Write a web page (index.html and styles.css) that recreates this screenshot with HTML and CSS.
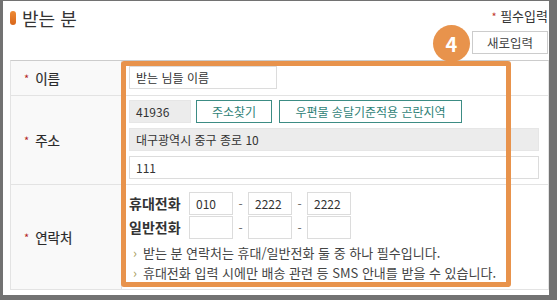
FILE: index.html
```html
<!DOCTYPE html>
<html lang="ko">
<head>
<meta charset="utf-8">
<link rel="stylesheet" href="styles.css">
</head>
<body>
<div class="frame">
  <div class="head">
    <h2 class="title"><span class="pill"></span>받는 분</h2>
    <div class="head-right">
      <div class="req"><span class="star">*</span> 필수입력</div>
      <button class="btn-reset">새로입력</button>
    </div>
  </div>
  <div class="table">
    <div class="th r1"><span class="star">*</span>이름</div>
    <div class="td r1">
      <div class="input w-name">받는 님들 이름</div>
    </div>
    <div class="th r2"><span class="star">*</span>주소</div>
    <div class="td r2 addr">
      <div class="line">
        <div class="input gray w-zip">41936</div>
        <button class="btn-teal w-find">주소찾기</button>
        <button class="btn-teal w-hard">우편물 송달기준적용 곤란지역</button>
      </div>
      <div class="input gray w-full">대구광역시 중구 종로 10</div>
      <div class="input w-full">111</div>
    </div>
    <div class="th r3"><span class="star">*</span>연락처</div>
    <div class="td r3 contact">
      <div class="phone">
        <span class="plabel">휴대전화</span>
        <div class="input w-ph">010</div><span class="dash">-</span>
        <div class="input w-ph">2222</div><span class="dash">-</span>
        <div class="input w-ph">2222</div>
      </div>
      <div class="phone">
        <span class="plabel">일반전화</span>
        <div class="input w-ph"></div><span class="dash">-</span>
        <div class="input w-ph"></div><span class="dash">-</span>
        <div class="input w-ph"></div>
      </div>
      <ul class="notes">
        <li>받는 분 연락처는 휴대/일반전화 둘 중 하나 필수입니다.</li>
        <li>휴대전화 입력 시에만 배송 관련 등 SMS 안내를 받을 수 있습니다.</li>
      </ul>
    </div>
  </div>
  <div class="highlight"></div>
  <div class="badge">4</div>
</div>
</body>
</html>
```
FILE: styles.css
```css
* { box-sizing: border-box; }
html, body { margin: 0; padding: 0; }
body {
  background: #727272;
  width: 557px;
  height: 300px;
  overflow: hidden;
  font-family: "Noto Sans CJK KR", "Noto Sans", sans-serif;
  color: #333;
}
.frame {
  position: relative;
  margin: 1px 0 0 3px;
  width: 546px;
  height: 294px;
  background: #fff;
  padding: 0 0 0 7px;
}
.head {
  display: flex;
  justify-content: space-between;
  height: 59px;
  padding-right: 1px;
}
.title {
  margin: 3px 0 0 0;
  padding-top: 3px;
  font-size: 18px;
  font-weight: 400;
  color: #333;
  display: flex;
  align-items: center;
  height: 24px;
  line-height: 24px;
}
.pill {
  display: inline-block;
  width: 6px;
  height: 14px;
  border-radius: 3px;
  background: linear-gradient(#ee8a34, #d8661a);
  margin-right: 6px;
}
.head-right {
  display: flex;
  flex-direction: column;
  align-items: flex-end;
  padding-top: 7px;
}
.req {
  font-size: 13px;
  line-height: 16px;
  color: #333;
  margin-bottom: 7px;
}
.req .star { color: #c0392b; font-size: 11px; }
.btn-reset {
  width: 76px;
  height: 23px;
  background: #fff;
  border: 1px solid #ccc;
  font-family: inherit;
  font-size: 12.5px;
  color: #444;
  padding: 0;
}
.table {
  display: grid;
  grid-template-columns: 111px 426px;
  grid-template-rows: 35px 89px 104px;
  border-top: 1px solid #ccc;
  border-left: 1px solid #e3e3e3;
  border-right: 1px solid #e3e3e3;
  border-bottom: 1px solid #e3e3e3;
  width: 539px;
}
.th {
  background: #f9f9f9;
  border-right: 1px solid #e3e3e3;
  border-bottom: 1px solid #e3e3e3;
  display: flex;
  align-items: center;
  padding-left: 13px;
  font-size: 13.5px;
  color: #2a2a2a;
  -webkit-text-stroke: 0.2px #2a2a2a;
}
.th .star {
  color: #b22222;
  font-size: 11px;
  margin-right: 6px;
  -webkit-text-stroke: 0;
}
.td {
  border-bottom: 1px solid #e3e3e3;
  padding: 5px 0 0 7px;
}
.r3 { border-bottom: none; }
.input {
  height: 23px;
  border: 1px solid #dcdcdc;
  background: #fff;
  font-size: 12px;
  line-height: 21px;
  padding: 0 6px;
  color: #333;
  white-space: nowrap;
}
.input.gray { background: #ececec; border-color: #e6e6e6; }
.w-name { width: 148px; }
.w-zip { width: 62px; }
.w-full { width: 410px; }
.w-ph { width: 44px; }
.addr { display: flex; flex-direction: column; gap: 5px; padding-top: 4px; }
.line { display: flex; gap: 5px; }
.btn-teal {
  height: 23px;
  background: #fff;
  border: 1px solid #3c8c84;
  color: #2f7f77;
  font-family: inherit;
  font-size: 12px;
  padding: 0;
}
.w-find { width: 76px; }
.w-hard { width: 183px; margin-left: 2px; }
.contact { padding-top: 6px; }
.phone { display: flex; align-items: center; height: 24px; }
.plabel {
  width: 60px;
  font-weight: 700;
  font-size: 14px;
  color: #333;
}
.dash {
  width: 15px;
  text-align: center;
  font-size: 12px;
  color: #666;
}
.notes {
  list-style: none;
  margin: 4px 0 0 0;
  padding: 0 0 0 4px;
  font-size: 13px;
  line-height: 20px;
  color: #444;
}
.notes li::before {
  content: "›";
  color: #a8a060;
  margin-right: 6px;
  font-size: 13px;
}
.highlight {
  position: absolute;
  left: 118px;
  top: 60px;
  width: 390px;
  height: 226px;
  border: 5px solid #e8934c;
  border-radius: 3px;
}
.badge {
  position: absolute;
  left: 430px;
  top: 24px;
  width: 37px;
  height: 37px;
  border-radius: 50%;
  background: #e8934c;
  color: #fff;
  font-weight: 700;
  font-size: 20px;
  display: flex;
  align-items: center;
  justify-content: center;
}
```
